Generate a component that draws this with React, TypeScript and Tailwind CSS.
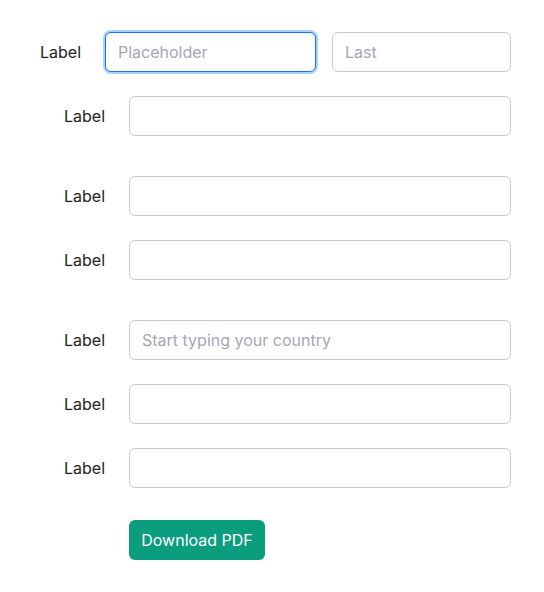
import React from "react";

const baseCls =
  "h-10 rounded-md border bg-white px-3 text-[16px] text-[#1f2937] placeholder:text-[#a6a6b6] outline-none";
const inputCls = `${baseCls} border-[#c9c9d6]`;

function Label() {
  return (
    <label className="w-[81px] shrink-0 text-right text-[16px] leading-6 text-[#222327]">
      Label
    </label>
  );
}

function Row({
  placeholder,
  className = "",
}: {
  placeholder?: string;
  className?: string;
}) {
  return (
    <div className={`flex items-center ${className}`}>
      <Label />
      <input className={`${inputCls} ml-6 w-[382px]`} placeholder={placeholder} />
    </div>
  );
}

export default function App() {
  return (
    <div
      className="w-[544px] h-[592px] bg-white pt-8"
      style={{ fontFamily: "Inter, 'Noto Sans', sans-serif" }}
    >
      {/* Name row */}
      <div className="flex items-center">
        <Label />
        <input
          autoFocus
          className={`${baseCls} ml-6 w-[211px] border-[#1a73e8] shadow-[0_0_0_2px_#a6d2fb] caret-[#222]`}
          placeholder="Placeholder"
        />
        <input className={`${inputCls} ml-4 w-[179px]`} placeholder="Last" />
      </div>

      <div className="pl-6">
        <Row className="mt-6" />

        <Row className="mt-10" />
        <Row className="mt-6" />

        <Row className="mt-10" placeholder="Start typing your country" />
        <Row className="mt-6" />
        <Row className="mt-6" />

        <div className="mt-8 pl-[105px]">
          <button className="h-10 w-[136px] rounded-md bg-[#0a9e7f] text-[16px] text-white">
            Download PDF
          </button>
        </div>
      </div>
    </div>
  );
}
